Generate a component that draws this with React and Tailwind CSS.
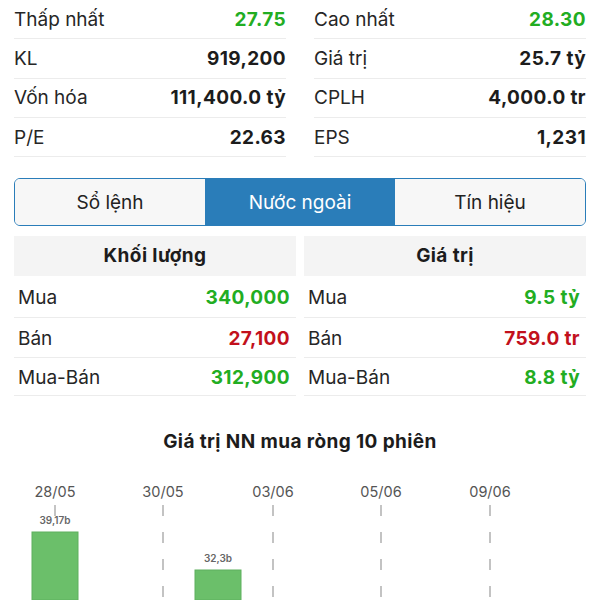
import { useState } from "react";

const stats = [
  [
    { label: "Thấp nhất", value: "27.75", color: "text-[#22ad22]" },
    { label: "Cao nhất", value: "28.30", color: "text-[#22ad22]" },
  ],
  [
    { label: "KL", value: "919,200" },
    { label: "Giá trị", value: "25.7 tỷ" },
  ],
  [
    { label: "Vốn hóa", value: "111,400.0 tỷ" },
    { label: "CPLH", value: "4,000.0 tr" },
  ],
  [
    { label: "P/E", value: "22.63" },
    { label: "EPS", value: "1,231" },
  ],
];

const tabs = ["Sổ lệnh", "Nước ngoài", "Tín hiệu"];

const volume = [
  { label: "Mua", value: "340,000", color: "text-[#22ad22]", h: "h-[42px]" },
  { label: "Bán", value: "27,100", color: "text-[#c2101c]", h: "h-10" },
  { label: "Mua-Bán", value: "312,900", color: "text-[#22ad22]", h: "h-[38px]" },
];

const amount = [
  { label: "Mua", value: "9.5 tỷ", color: "text-[#22ad22]", h: "h-[42px]" },
  { label: "Bán", value: "759.0 tr", color: "text-[#c2101c]", h: "h-10" },
  { label: "Mua-Bán", value: "8.8 tỷ", color: "text-[#22ad22]", h: "h-[38px]" },
];

const dates = [
  { x: 55, label: "28/05" },
  { x: 163, label: "30/05" },
  { x: 273, label: "03/06" },
  { x: 381, label: "05/06" },
  { x: 490, label: "09/06" },
];

const bars = [
  { x: 32, top: 532, label: "39,17b" },
  { x: 195, top: 570, label: "32,3b" },
];

function StatCell({ label, value, color }) {
  return (
    <div className="flex h-[39.3px] items-center justify-between border-b border-[#ececec] pt-[2px]">
      <span className="text-[#262626]">{label}</span>
      <span className={`font-bold tracking-[0.4px] ${color || "text-[#1c1c1c]"}`}>{value}</span>
    </div>
  );
}

function FlowTable({ title, rows, pad }) {
  return (
    <div>
      <div className="flex h-10 items-center justify-center bg-[#f4f4f4] font-bold tracking-[0.4px] text-[#1c1c1c]">
        {title}
      </div>
      {rows.map((r) => (
        <div
          key={r.label}
          className={`flex items-center justify-between border-b border-[#ececec] pt-[3px] ${r.h} ${pad}`}
        >
          <span className="text-[#262626]">{r.label}</span>
          <span className={`font-bold tracking-[0.4px] ${r.color}`}>{r.value}</span>
        </div>
      ))}
    </div>
  );
}

function NetChart() {
  return (
    <svg width="600" height="130" viewBox="0 470 600 130" className="block">
      {dates.map((d) => (
        <g key={d.label}>
          <text
            x={d.x}
            y="497"
            textAnchor="middle"
            fontSize="14.5"
            fill="#555"
            fontFamily="Inter, sans-serif"
          >
            {d.label}
          </text>
          <line
            x1={d.x}
            y1="505"
            x2={d.x}
            y2="600"
            stroke="#b0b0b0"
            strokeWidth="1.5"
            strokeDasharray="11 16"
          />
        </g>
      ))}
      {bars.map((b) => (
        <g key={b.label}>
          <text
            x={b.x + 23}
            y={b.top - 8}
            textAnchor="middle"
            fontSize="10"
            fontWeight="600"
            fill="#666"
            fontFamily="Inter, sans-serif"
          >
            {b.label}
          </text>
          <rect x={b.x} y={b.top} width="46" height={600 - b.top} fill="#6bbf6a" stroke="#5fb05e" />
        </g>
      ))}
    </svg>
  );
}

export default function App() {
  const [tab, setTab] = useState(1);

  return (
    <div className="h-[600px] w-[600px] overflow-hidden bg-white font-['Inter',sans-serif] text-[19px]">
      <div className="grid grid-cols-2 gap-x-7 px-[14px]">
        {stats.map((row) =>
          row.map((cell) => <StatCell key={cell.label} {...cell} />)
        )}
      </div>

      <div className="mx-[14px] mt-[21px] grid h-12 grid-cols-3 overflow-hidden rounded-md border-[1.5px] border-[#2a7db9]">
        {tabs.map((t, i) => (
          <button
            key={t}
            onClick={() => setTab(i)}
            className={`flex items-center justify-center pt-[2px] ${
              i === tab ? "bg-[#2a7db9] text-white" : "bg-[#f7f7f7] text-[#222]"
            }`}
          >
            {t}
          </button>
        ))}
      </div>

      <div className="mt-[10px] grid grid-cols-2 gap-2 px-[14px]">
        <FlowTable title="Khối lượng" rows={volume} pad="pl-1 pr-1.5" />
        <FlowTable title="Giá trị" rows={amount} pad="pl-1 pr-1.5" />
      </div>

      <div className="mt-[32px] text-center font-bold tracking-[0.4px] text-[#1c1c1c]">
        Giá trị NN mua ròng 10 phiên
      </div>

      <div className="mt-[13px]">
        <NetChart />
      </div>
    </div>
  );
}
